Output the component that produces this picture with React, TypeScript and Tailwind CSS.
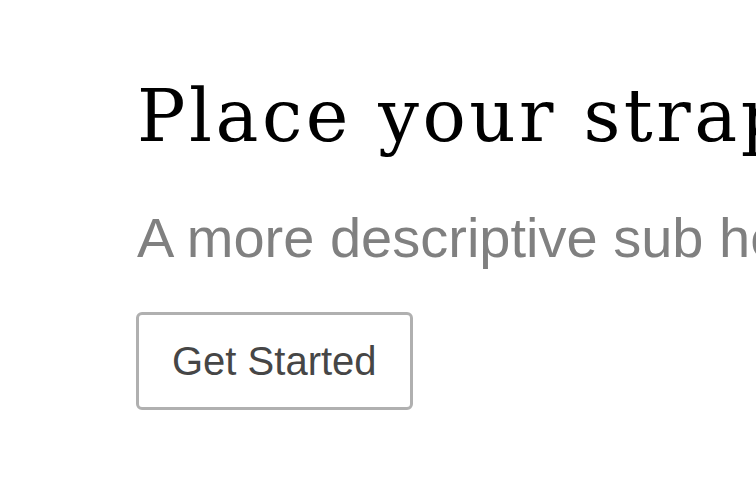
export default function App() {
  return (
    <div className="w-[756px] h-[500px] overflow-hidden bg-white">
      <section className="pl-[137px] pt-[72px] whitespace-nowrap">
        <h1 className="font-['DejaVu_Serif',serif] text-[72px] leading-[88px] text-black tracking-[3.5px]">
          Place your strapline here
        </h1>
        <p className="mt-[46px] font-['Liberation_Sans',Arial,sans-serif] text-[56px] leading-[64px] text-[#808080]">
          A more descriptive sub heading
        </p>
        <button className="-ml-px mt-[42px] rounded-[6px] border-[3px] border-[#b0b0b0] bg-white px-[33px] py-[22px] font-['Liberation_Sans',Arial,sans-serif] text-[40px] leading-[48px] text-[#464646]">
          Get Started
        </button>
      </section>
    </div>
  );
}
